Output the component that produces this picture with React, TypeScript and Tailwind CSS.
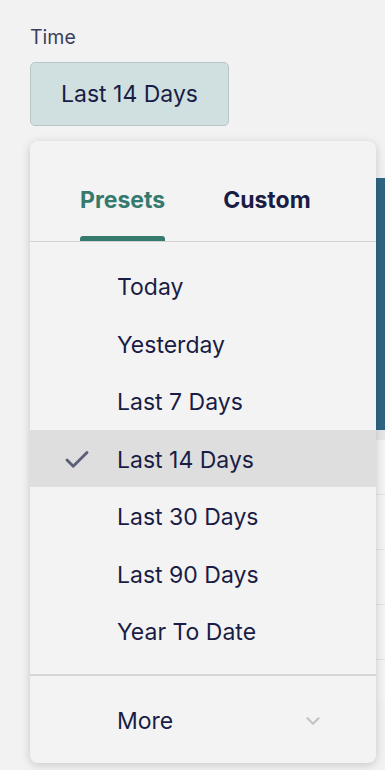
import { Check, ChevronDown } from 'lucide-react';

const PRESETS = [
  'Today',
  'Yesterday',
  'Last 7 Days',
  'Last 14 Days',
  'Last 30 Days',
  'Last 90 Days',
  'Year To Date',
];

const SELECTED = 'Last 14 Days';

// 팝오버 뒤쪽에 깔린 대시보드 일부
function Backdrop() {
  return (
    <div className="mt-[52px] flex flex-col">
      <div className="h-[252px] bg-[#2e6682]" />
      <div className="h-[10px] bg-[#e6e6e6]" />
      <div className="bg-[#f4f4f4]">
        {[0, 1, 2, 3].map((i) => (
          <div key={i} className="h-[55px] border-b border-[#e2e2e2]" />
        ))}
        <div className="flex h-[40px] items-start gap-4 pl-[53px] pt-[2px] text-[18px] text-[#9a9a9a]">
          <span>ꕤ</span>
          <span>40%</span>
          <span className="text-[#3a3f5c]">|</span>
          <div className="ml-[36px] h-[40px] w-[108px] bg-[#3d86a8]" />
        </div>
      </div>
    </div>
  );
}

export default function App() {
  return (
    <div
      className="relative h-[770px] w-[385px] overflow-hidden bg-[#f2f2f2] pl-[30px]"
      style={{ fontFamily: 'Inter, "Open Sans", sans-serif' }}
    >
      <div className="pt-[23px] text-[19.5px] leading-[28px] text-[#3b3f5e]">Time</div>
      <button className="mt-[11px] h-[64px] w-[199px] rounded-[5px] border border-[#b9c6c6] bg-[#d0dfdf] text-[23px] text-[#191d45]">
        Last 14 Days
      </button>

      <Backdrop />

      {/* 프리셋 드롭다운 */}
      <div className="absolute left-[30px] top-[141px] flex h-[622px] w-[346px] flex-col rounded-[8px] bg-[#f3f3f3] shadow-[0_2px_10px_rgba(0,0,0,0.18)]">
        <div className="flex h-[101px] items-end gap-[58px] border-b border-[#d2d2d2] pl-[50px]">
          <div className="flex flex-col items-stretch">
            <span className="text-[23px] font-bold leading-[30px] text-[#367a6e]">Presets</span>
            <div className="mt-[21px] h-[5px] rounded-t-[3px] bg-[#367a6e]" />
          </div>
          <div className="flex flex-col">
            <span className="text-[23px] font-bold leading-[30px] text-[#191d45]">Custom</span>
            <div className="mt-[21px] h-[5px]" />
          </div>
        </div>

        <div className="flex flex-col border-b-2 border-[#d6d6d6] pb-[14px] pt-[15px]">
          {PRESETS.map((label) => (
            <div
              key={label}
              className={`relative flex h-[57.5px] items-center pl-[87px] pt-[3px] text-[23px] text-[#191d45] ${
                label === SELECTED ? 'bg-[#dedede]' : ''
              }`}
            >
              {label === SELECTED && (
                <Check className="absolute left-[32px] h-[30px] w-[30px] text-[#5c5f78]" strokeWidth={2.3} />
              )}
              {label}
            </div>
          ))}
        </div>

        <div className="flex flex-1 items-center justify-between pl-[87px] pr-[52px] pt-[3px] text-[23px] text-[#191d45]">
          <span>More</span>
          <ChevronDown className="h-[22px] w-[22px] text-[#c4c4c4]" strokeWidth={2.5} />
        </div>
      </div>
    </div>
  );
}
